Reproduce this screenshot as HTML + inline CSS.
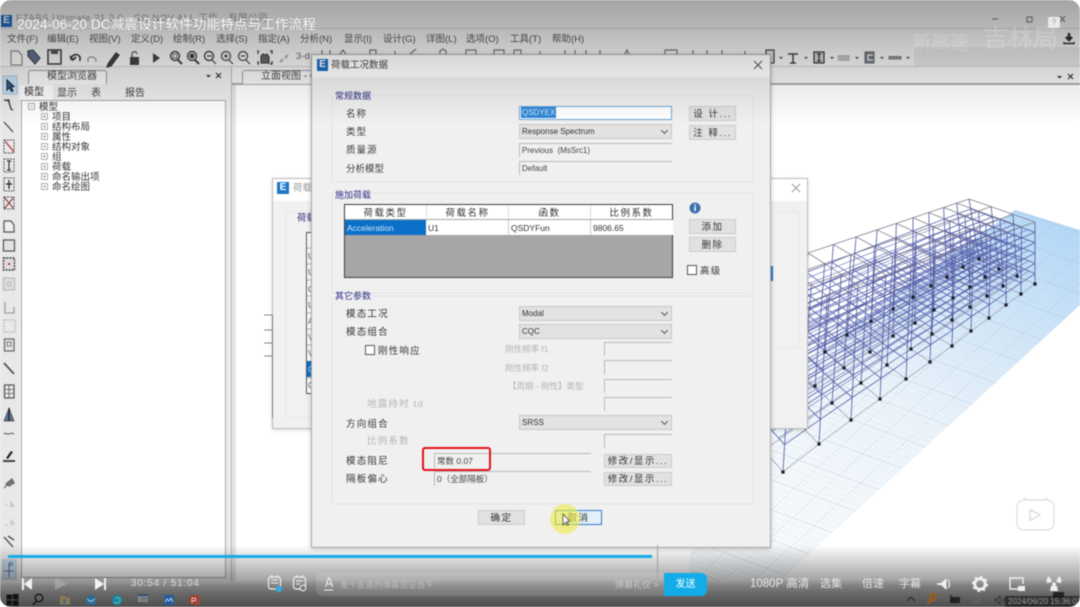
<!DOCTYPE html>
<html lang="zh"><head><meta charset="utf-8"><title>DC减震设计软件</title>
<style>
html,body{margin:0;padding:0;width:1080px;height:607px;overflow:hidden;background:#fff}
#p{position:absolute;left:0;top:0;width:1080px;height:607px;overflow:hidden;background:#fff;border-radius:11px;font-family:"Liberation Sans","Noto Sans CJK SC",sans-serif;font-size:9px;color:#333;filter:blur(.5px)}
.b{position:absolute}
.t{position:absolute;white-space:nowrap;line-height:14px;height:14px}
.m{font-size:9.5px;color:#555;margin-top:1.5px}
.n{font-size:9.5px;color:#3c3c3c;margin-top:1.5px}
.l{letter-spacing:1.2px;font-size:9.5px;color:#333;margin-top:1.5px}
.tr{font-size:9.5px;margin-top:1.5px}
.h{color:#2d2d86;font-size:9px}
.g{color:#b5b5b5;font-size:8.5px}
.gl{color:#b5b5b5;font-size:9.5px;letter-spacing:1.2px;margin-top:1px}
.btn{position:absolute;background:#e1e1e1;border:1px solid #cdcdcd;box-sizing:border-box;text-align:center;font-size:9.5px;letter-spacing:1.5px;color:#333;line-height:15px;white-space:nowrap}
.sel{position:absolute;left:519px;width:153px;height:15px;background:#e2e2e2;border:1px solid #c8c8c8;box-sizing:border-box;font-size:8px;line-height:13px;padding-left:2px;color:#333}
.sel:after{content:"";position:absolute;right:4px;top:3px;width:4px;height:4px;border-right:1px solid #555;border-bottom:1px solid #555;transform:rotate(45deg)}
.f{position:absolute;background:#f0f0f0;border-top:1px solid #b9b9b9;border-left:1px solid #b9b9b9;box-sizing:border-box;font-size:8px;line-height:14px;padding-left:2px;color:#444;white-space:nowrap}
.c{position:absolute;font-size:8.5px;line-height:16px;top:220px;height:15px;color:#333;padding-left:2px;white-space:nowrap}
.th{position:absolute;top:205px;height:14px;line-height:17px;text-align:center;font-size:9.5px;letter-spacing:1.5px;color:#333;background:#fff;border-right:1px solid #ddd;box-sizing:border-box;white-space:nowrap;overflow:hidden}
.w{color:#e6e6e6}
.q{position:absolute;left:308px;font-size:8.5px;line-height:12px;color:#555}
svg{position:absolute;left:0;top:0}
</style></head><body>
<div id="p">

<!-- application chrome -->
<div class="b" style="left:0;top:0;width:1080px;height:84px;background:#f2f2f2"></div>
<div class="b" style="left:0;top:28px;width:1080px;height:1px;background:#d6d6d6"></div>
<div class="b" style="left:914px;top:47px;width:166px;height:19px;background:#e2e2e2"></div>
<div class="b" style="left:0;top:66px;width:1080px;height:1px;background:#d0d0d0"></div>
<div class="b" style="left:232px;top:83px;width:848px;height:2px;background:#a9a9a9"></div>
<div class="b" style="left:0;top:67px;width:18px;height:515px;background:#e8e8e8"></div>
<div class="b" style="left:18px;top:67px;width:214px;height:515px;background:#ececec;border-right:1px solid #b5b5b5;box-sizing:border-box"></div>
<div class="b" style="left:21px;top:100px;width:205px;height:478px;background:#fff;border:1px solid #a8a8a8;box-sizing:border-box"></div>
<div class="b" style="left:28px;top:70px;width:79px;height:14px;background:#f4f4f4;border:1px solid #999;border-bottom:0;border-radius:3px 3px 0 0;box-sizing:border-box"></div>
<div class="b" style="left:20px;top:85px;width:33px;height:15px;background:#fafafa"></div>
<div class="b" style="left:242px;top:70px;width:80px;height:14px;background:#f4f4f4;border:1px solid #999;border-bottom:0;border-radius:3px 3px 0 0;box-sizing:border-box"></div>
<div class="b" style="left:232px;top:85px;width:4px;height:497px;background:#e6e6e6"></div>

<!-- 3D view -->
<svg id="v" width="1080" height="607" viewBox="0 0 1080 607">
<defs><linearGradient id="pl" x1="1040" y1="215" x2="820" y2="540" gradientUnits="userSpaceOnUse"><stop offset="0" stop-color="#b4d8f8"/><stop offset=".3" stop-color="#d3e7f8"/><stop offset=".6" stop-color="#ecf4fb"/><stop offset="1" stop-color="#f7fafc"/></linearGradient>
<clipPath id="cp"><polygon points="1015,210 1080,230 1080,305 770,590 690,590 690,440"/></clipPath></defs>
<polygon points="1015,210 1080,230 1080,305 770,590 690,590 690,440" fill="url(#pl)"/>
<g id="gr" clip-path="url(#cp)"></g>
<g id="st"></g>
</svg>

<!-- title bar + menu -->
<div class="b" style="left:1px;top:15px;width:11px;height:12px;background:#1d6fc0;color:#fff;font:bold 10px/12px 'Liberation Sans',sans-serif;text-align:center">E</div>
<div class="t" style="left:16px;top:12px;font-size:9.5px;color:#9a9a9a;letter-spacing:.5px">ETABS Ultimate 21.3.0 - GQ NOV ALL 工作 - 有限公司</div>
<div class="t m" style="left:7px;top:31px">文件(F)</div>
<div class="t m" style="left:47px;top:31px">编辑(E)</div>
<div class="t m" style="left:89px;top:31px">视图(V)</div>
<div class="t m" style="left:131px;top:31px">定义(D)</div>
<div class="t m" style="left:173px;top:31px">绘制(R)</div>
<div class="t m" style="left:216px;top:31px">选择(S)</div>
<div class="t m" style="left:258px;top:31px">指定(A)</div>
<div class="t m" style="left:300px;top:31px">分析(N)</div>
<div class="t m" style="left:344px;top:31px">显示(I)</div>
<div class="t m" style="left:383px;top:31px">设计(G)</div>
<div class="t m" style="left:426px;top:31px">详图(L)</div>
<div class="t m" style="left:466px;top:31px">选项(O)</div>
<div class="t m" style="left:510px;top:31px">工具(T)</div>
<div class="t m" style="left:552px;top:31px">帮助(H)</div>
<div class="t" style="left:296px;top:50px;font-size:9.5px;color:#666">3-d</div>

<!-- toolbar icons -->
<svg width="1080" height="607" viewBox="0 0 1080 607" fill="none" stroke="#555" stroke-width="1.2">
<path d="M11 51h7l4 4v10H11z" fill="#f4f4f4" stroke="#888"/>
<path d="M28 51l5-1 7 8-5 6-7-8z" fill="#5d6f88" stroke="#445"/>
<rect x="48" y="50" width="13" height="14" fill="#eee" stroke="#444" stroke-width="1.6"/><rect x="51" y="50" width="7" height="4" fill="#555" stroke="none"/>
<path d="M71 60c0-6 7-7 9-3l0 4M70 56l3 4 3-3" stroke="#333" stroke-width="1.6"/>
<path d="M96 62c1-5-6-7-8-3l0 3" stroke="#999" stroke-width="1.4"/>
<path d="M108 64l8-11 3 2-8 11-4 1z" fill="#444" stroke="#333"/>
<rect x="130" y="57" width="9" height="8" fill="#444" stroke="none"/><path d="M132 57v-3c0-3 5-3 5 0"/>
<path d="M153 53l7 5-7 5z" fill="#444" stroke="none"/>
<g stroke="#444"><circle cx="175" cy="56" r="4.500" stroke-width="1.4"/><path d="M178 60l4 4" stroke-width="2"/><rect x="173" y="54" width="4" height="4" stroke-width=".8"/>
<circle cx="192" cy="56" r="4.500" stroke-width="1.4"/><circle cx="192" cy="56" r="2" fill="#444"/><path d="M195 60l4 4" stroke-width="2"/>
<circle cx="209" cy="56" r="4.500" stroke-width="1.4"/><path d="M207 56h5M212 60l4 4" /><circle cx="226" cy="56" r="4.500" stroke-width="1.2"/><path d="M224 56h4M226 54v4M229 60l4 4"/>
<circle cx="243" cy="56" r="4.500" stroke-width="1.2"/><path d="M241 56h4M246 60l4 4"/></g>
<path d="M259 51h-1v3M270 51h2v3M259 64h-1v-3M270 64h2v-3" stroke="#333"/><path d="M261 63v-7l2-2 2 1 2-1 2 3v6z" fill="#666" stroke="#444"/>
<path d="M280 62l3-3M285 58l3-3" stroke="#aaa" stroke-width="2"/>
<!-- partly hidden row above dialog -->
<g stroke="#777"><path d="M322 54v-4M330 54v-4M340 54l3-4 3 4M370 54v-4h6v4M395 54v-3M410 54l6-5M440 54v-3l3-2 3 2v3M466 54v-4h10v4M494 54v-4h10v4M514 54v-4h7v4M540 54v-3M565 54v-4M575 54v-4M586 54v-4M600 54v-4M625 54l2-4 2 4M665 54v-4h12v4M693 54v-4M707 54v-4M722 54v-4M745 54v-3"/></g>
<rect x="766" y="50" width="8" height="13" fill="#ddd" stroke="#444"/>
<g fill="#444" stroke="none"><path d="M779 57h4l-2 2zM804 57h4l-2 2zM830 57h4l-2 2zM855 57h4l-2 2zM880 57h4l-2 2zM906 57h4l-2 2z"/></g>
<path d="M788 54h10M793 54v9M790 63h6" stroke="#444" stroke-width="1.5"/>
<rect x="814" y="52" width="10" height="11" fill="#ccc" stroke="#333"/><path d="M817 54h4M819 54v7M817 61h4" stroke="#333"/>
<path d="M838 56h12M838 58h12M838 60h12" stroke="#777" stroke-dasharray="1 .5"/>
<rect x="865" y="52" width="9" height="11" fill="#6b7382" stroke="#777"/><path d="M873 55h-5v5h5" stroke="#ddd" stroke-width="1.5"/>
<rect x="889" y="56.500" width="12" height="2.500" fill="#999" stroke="#666" stroke-width=".8"/>
<path d="M1069 33v6m-3-2 3 3 3-3" stroke="#333" stroke-width="2.500"/><path d="M1064 42v1.500h10V42" stroke="#333" stroke-width="1.5"/>
<path d="M992 19h6" stroke="#888"/><rect x="1027" y="17" width="5" height="5" stroke="#888"/><path d="M1060 16l5 6m0-6l-5 6" stroke="#888"/>
<path d="M206 75h5l-2.500 2.500z" fill="#333" stroke="none"/><path d="M216 73l5 5m0-5l-5 5" stroke="#333"/>
<path d="M1057 76h5l-2.500 2.500z" fill="#333" stroke="none"/><path d="M1068 74l5 5m0-5l-5 5" stroke="#333"/>

<!-- left vertical toolbar -->
<rect x="3" y="76" width="14" height="18" fill="#c6dcf0" stroke="#8fb0d0" stroke-width=".7"/>
<path d="M7 80l0 10 2.500-2.500 2 4 1.500-.8-2-3.700 3-.5z" fill="#2f5f95" stroke="#234"/>
<path d="M4 100l6 1M8 99l3 10 2 1" stroke="#444" stroke-width="1.4"/>
<path d="M4 122l9 10" stroke="#444" stroke-width="1.2"/>
<g stroke="#555" stroke-dasharray="2 1" stroke-width="1"><rect x="4" y="140" width="10" height="13"/><rect x="4" y="159" width="10" height="13"/><rect x="4" y="178" width="10" height="13"/><rect x="4" y="197" width="10" height="12"/></g>
<path d="M5 141l9 11" stroke="#a33"/><path d="M9 161v9M7 161h4M7 170h4" stroke="#333"/><path d="M9 180v9M6 184h6" stroke="#333" stroke-width="1.4"/><path d="M4 197l10 12M14 197l-10 12" stroke="#844"/>
<path d="M4 221h7l3 4v7H4z" fill="#f0f0f0" stroke="#555"/>
<rect x="3.500" y="240" width="11" height="11" fill="#e2e2e2" stroke="#555"/>
<rect x="3.500" y="258" width="11" height="12" fill="#ddd" stroke="#444" stroke-dasharray="2 1" stroke-width="1.4"/><rect x="8" y="263" width="2" height="2" fill="#b33" stroke="none"/>
<rect x="3.500" y="278" width="11" height="12" fill="#ddd" stroke="#bbb"/><circle cx="9" cy="284" r="2" stroke="#bbb"/>
<path d="M5 302v11h9v-6" stroke="#aaa" stroke-width="1.6"/>
<rect x="4" y="320" width="11" height="12" stroke="#bbb" stroke-dasharray="2 1"/>
<rect x="4.500" y="339" width="9.500" height="12" fill="#e2e2e2" stroke="#666"/><rect x="7" y="342" width="4" height="4" stroke="#666" stroke-width=".8"/>
<path d="M4 363l10 11" stroke="#555" stroke-width="1.8"/>
<rect x="4.500" y="385" width="9.500" height="13" stroke="#555"/><path d="M4.500 389.500h9.500M4.500 393.500h9.500M9 385v13" stroke="#555" stroke-width=".8"/>
<path d="M9 408l-5 13h10z" fill="#5d7390" stroke="#444" stroke-width=".7"/><path d="M9 408v13" stroke="#222"/>
<path d="M4 434c2-2 3 1 5 0s3-1 5 0" stroke="#666"/>
<path d="M6 458l5-7 2 1-5 7z" fill="#222" stroke="none"/><path d="M3 461h12" stroke="#444" stroke-width="2"/>
<path d="M4 488l3-3M6 484l6-5 2 4-5 3z" fill="#777" stroke="#666"/>
<path d="M5 505h3M11 502l3 4-3 1z" fill="#bbb" stroke="#ccc"/>
<path d="M5 525h3M11 520l3 4-3 1z" fill="#bbb" stroke="#ccc"/>
<path d="M4 537l9 10M8 536l6 4" stroke="#555" stroke-width="1.4"/>
<rect x="3" y="560" width="13" height="19" fill="#c2d8ea" stroke="#9db7cc" stroke-width=".7"/>
<path d="M9 563v14M4 571h10" stroke="#557" stroke-width=".8"/><circle cx="11" cy="564" r="1.500" stroke="#557" stroke-width=".7"/>
<!-- tree -->
<g stroke="#9a9a9a" stroke-width=".8">
<rect x="28.500" y="103.500" width="6" height="6" fill="#fff"/><path d="M30 106.500h3"/>
<g fill="#fff"><rect x="41.500" y="113.500" width="6" height="6"/><rect x="41.500" y="123.500" width="6" height="6"/><rect x="41.500" y="133.500" width="6" height="6"/><rect x="41.500" y="143.500" width="6" height="6"/><rect x="41.500" y="153.500" width="6" height="6"/><rect x="41.500" y="163.500" width="6" height="6"/><rect x="41.500" y="173.500" width="6" height="6"/><rect x="41.500" y="183.500" width="6" height="6"/></g>
<path d="M43 116.500h3M44.500 115v3M43 126.500h3M44.500 125v3M43 136.500h3M44.500 135v3M43 146.500h3M44.500 145v3M43 156.500h3M44.500 155v3M43 166.500h3M44.500 165v3M43 176.500h3M44.500 175v3M43 186.500h3M44.500 185v3"/>
</g>
<!-- lines left of back dialog -->
<path d="M264 315h8M264 330h8M264 343h8M264 356h8" stroke="#888" stroke-width="1"/>
</svg>

<div class="t" style="left:47px;top:70px;font-size:10px;color:#444">模型浏览器</div>
<div class="t" style="left:261px;top:70px;font-size:10px;color:#444">立面视图 - G</div>
<div class="t" style="left:24px;top:86px;font-size:10px;color:#333">模型</div>
<div class="t" style="left:57px;top:87px;font-size:10px;color:#444">显示</div>
<div class="t" style="left:91px;top:87px;font-size:10px;color:#444">表</div>
<div class="t" style="left:125px;top:87px;font-size:10px;color:#444">报告</div>
<div class="t tr" style="left:39px;top:99px">模型</div>
<div class="t tr" style="left:52px;top:109px">项目</div>
<div class="t tr" style="left:52px;top:119px">结构布局</div>
<div class="t tr" style="left:52px;top:129px">属性</div>
<div class="t tr" style="left:52px;top:139px">结构对象</div>
<div class="t tr" style="left:52px;top:149px">组</div>
<div class="t tr" style="left:52px;top:159px">荷载</div>
<div class="t tr" style="left:52px;top:169px">命名输出项</div>
<div class="t tr" style="left:52px;top:179px">命名绘图</div>

<!-- back dialog -->
<div class="b" style="left:272px;top:178px;width:536px;height:251px;background:#f1f1f1;border:1px solid #bdbdbd;box-sizing:border-box;box-shadow:0 1px 4px rgba(0,0,0,.15)">
 <div class="b" style="left:0;top:0;width:534px;height:22px;background:#fff"></div>
 <div class="b" style="left:505px;top:32px;width:20px;height:135px;border:1px solid #e6e6e6;border-left:0"></div>
 <div class="b" style="left:12px;top:32px;width:28px;height:205px;border:1px solid #e8e8e8;border-right:0"></div>
</div>
<div class="b" style="left:272px;top:315px;width:1px;height:103px;background:#777"></div>
<div class="b" style="left:277px;top:182px;width:12px;height:12px;background:#1d78c8;color:#fff;font:bold 10px/12px 'Liberation Sans',sans-serif;text-align:center">E</div>
<div class="t" style="left:293px;top:182px;font-size:9.5px;color:#999">荷载</div>
<div class="t" style="left:297px;top:212px;font-size:9.5px;color:#2d2d86">荷载</div>
<div class="b" style="left:306px;top:232px;width:6px;height:162px;background:#fff;border:1px solid #555;box-sizing:border-box"></div>
<div class="b" style="left:307px;top:361px;width:5px;height:16px;background:#0a70c8"></div>
<div class="q" style="top:250px">U</div><div class="q" style="top:266px">U</div><div class="q" style="top:283px">C</div><div class="q" style="top:299px">U</div><div class="q" style="top:315px">A</div><div class="q" style="top:331px">V</div><div class="q" style="top:347px">V</div><div class="q" style="top:363px;color:#cfe4f7">Q</div><div class="q" style="top:379px">Q</div>
<svg width="1080" height="607" viewBox="0 0 1080 607" fill="none" stroke="#bbb"><path d="M307 248h5M307 264h5M307 280h5M307 296h5M307 313h5M307 329h5M307 345h5M307 378h5"/><path d="M792 184l8 8m0-8l-8 8" stroke="#999"/></svg>
<div class="b" style="left:771px;top:266px;width:2px;height:15px;background:#2a78c0"></div>

<!-- main dialog -->
<div class="b" style="left:311px;top:54px;width:460px;height:494px;background:#f0f0f0;border:1px solid #a9a9a9;box-sizing:border-box;box-shadow:0 1px 5px rgba(0,0,0,.2)"></div>
<div class="b" style="left:312px;top:55px;width:458px;height:22px;background:#fff"></div>
<div class="b" style="left:317px;top:59px;width:11px;height:12px;background:#1d6fc0;color:#fff;font:bold 10px/12px 'Liberation Sans',sans-serif;text-align:center">E</div>
<div class="t" style="left:331px;top:59px;font-size:9.5px;color:#444">荷载工况数据</div>

<svg width="1080" height="607" viewBox="0 0 1080 607" fill="none">
<path d="M754 61l8 8m0-8l-8 8" stroke="#555"/>
<path d="M332 96v86h421V96h-383M332 193v100h421V193H370M332 296v208h421V296H370" stroke="#e4e4e4"/>
<circle cx="695" cy="208" r="5.500" fill="#3f6fae"/><rect x="694.300" y="206.500" width="1.500" height="4.500" fill="#fff"/><rect x="694.300" y="204.200" width="1.500" height="1.400" fill="#fff"/>
<rect x="687.500" y="265.500" width="9" height="9" fill="#fff" stroke="#555"/>
<rect x="365.500" y="345.500" width="9" height="9" fill="#fff" stroke="#555"/>
</svg>

<div class="t h" style="left:335px;top:89px">常规数据</div>
<div class="t n" style="left:346px;top:106px;letter-spacing:1px">名称</div>
<div class="t n" style="left:346px;top:124px;letter-spacing:1px">类型</div>
<div class="t n" style="left:346px;top:142px;letter-spacing:1px">质量源</div>
<div class="t n" style="left:346px;top:161px">分析模型</div>
<div class="f" style="left:519px;top:106px;width:153px;height:14px;background:#fff;border:1px solid #6aa6d6;line-height:12px;padding-left:1px"><span style="background:#2f86d6;color:#cfe6fa;padding:0 1px;display:inline-block;line-height:11px">QSDYEX</span></div>
<div class="sel" style="top:124px">Response Spectrum</div>
<div class="f" style="left:519px;top:143px;width:153px;height:14px">Previous&nbsp; (MsSrc1)</div>
<div class="f" style="left:519px;top:161px;width:153px;height:14px">Default</div>
<div class="btn" style="left:689px;top:106px;width:47px;height:15px">设 计...</div>
<div class="btn" style="left:689px;top:125px;width:47px;height:15px">注 释...</div>

<div class="t h" style="left:335px;top:188px">施加荷载</div>
<div class="b" style="left:344px;top:204px;width:329px;height:74px;background:#a6a6a6;border:1.500px solid #3e3e3e;box-sizing:border-box"></div>
<div class="th" style="left:345px;width:82px">荷载类型</div>
<div class="th" style="left:427px;width:82px">荷载名称</div>
<div class="th" style="left:509px;width:82px">函数</div>
<div class="th" style="left:591px;width:81px;border-right:0">比例系数</div>
<div class="c" style="left:345px;width:80px;background:#0a70c8;color:#cfe4f7">Acceleration</div>
<div class="c" style="left:426px;width:80px;background:#fff">U1</div>
<div class="c" style="left:508px;width:80px;background:#fff;border-left:1px solid #ccc">QSDYFun</div>
<div class="c" style="left:590px;width:80px;background:#fff;border-left:1px solid #ccc">9806.65</div>
<div class="btn" style="left:689px;top:219px;width:47px;height:15px">添加</div>
<div class="btn" style="left:689px;top:237px;width:47px;height:15px">删除</div>
<div class="t l" style="left:700px;top:263px">高级</div>

<div class="t h" style="left:335px;top:289px">其它参数</div>
<div class="t l" style="left:346px;top:306px">模态工况</div>
<div class="t l" style="left:346px;top:324px">模态组合</div>
<div class="t l" style="left:378px;top:343px">刚性响应</div>
<div class="t gl" style="left:367px;top:397px">地震持时 td</div>
<div class="t l" style="left:346px;top:416px">方向组合</div>
<div class="t gl" style="left:367px;top:434px">比例系数</div>
<div class="t l" style="left:346px;top:453px">模态阻尼</div>
<div class="t l" style="left:346px;top:471px">隔板偏心</div>
<div class="t g" style="left:505px;top:342px">刚性频率 f1</div>
<div class="t g" style="left:505px;top:361px">刚性频率 f2</div>
<div class="t g" style="left:508px;top:379px">【周期 - 刚性】类型</div>
<div class="sel" style="top:306px">Modal</div>
<div class="sel" style="top:324px">CQC</div>
<div class="sel" style="top:415px">SRSS</div>
<div class="f" style="left:604px;top:342px;width:68px;height:14px"></div>
<div class="f" style="left:604px;top:360px;width:68px;height:14px"></div>
<div class="f" style="left:604px;top:379px;width:68px;height:14px"></div>
<div class="f" style="left:604px;top:397px;width:68px;height:14px"></div>
<div class="f" style="left:604px;top:434px;width:68px;height:14px"></div>
<div class="f" style="left:434px;top:453px;width:157px;height:15px;font-size:8.5px">常数 0.07</div>
<div class="f" style="left:434px;top:471px;width:157px;height:15px;font-size:8.5px">0（全部隔板）</div>
<div class="btn" style="left:604px;top:454px;width:68px;height:14px;line-height:13px">修改/显示...</div>
<div class="btn" style="left:604px;top:472px;width:68px;height:14px;line-height:13px">修改/显示...</div>
<div class="b" style="left:422px;top:447px;width:69px;height:24px;border:2px solid #e2141a;border-radius:3px;box-sizing:border-box"></div>

<div class="btn" style="left:478px;top:510px;width:47px;height:15px">确定</div>
<div class="btn" style="left:555px;top:510px;width:47px;height:15px;background:#e3f0fa;border-color:#2c7fc8">取消</div>
<div class="b" style="left:550px;top:504px;width:30px;height:30px;border-radius:50%;background:radial-gradient(circle,rgba(238,235,70,.7) 0,rgba(238,235,70,.6) 65%,rgba(238,235,70,0) 100%)"></div>
<svg width="1080" height="607" viewBox="0 0 1080 607"><path d="M563 514v11l2.500-2.500 2 3 1.200-.8-2-3 3-.3z" fill="#fff" stroke="#444" stroke-width=".8"/></svg>

<!-- logo bottom right -->
<svg width="1080" height="607" viewBox="0 0 1080 607" fill="none">
<path d="M1024 498l3 3M1047 498l-3 3" stroke="#e0e0e0" stroke-width="1.5"/>
<rect x="1017" y="500" width="37" height="30" rx="7" fill="#fff" stroke="#e2e2e2" stroke-width="1.4"/>
<path d="M1030 509.500l10 5.500-10 5.500z" fill="#fff" stroke="#dcdcdc" stroke-width="1.5" stroke-linejoin="round"/>
</svg>

<!-- dim overlays -->
<div class="b" style="left:0;top:0;width:1080px;height:125px;background:linear-gradient(rgba(0,0,0,.32) 0,rgba(0,0,0,.25) 25px,rgba(0,0,0,.17) 50px,rgba(0,0,0,.09) 80px,rgba(0,0,0,0) 125px)"></div>
<div class="b" style="left:0;top:545px;width:1080px;height:37px;background:linear-gradient(rgba(0,0,0,0),rgba(0,0,0,.38))"></div>
<div class="b" style="left:0;top:581px;width:1080px;height:26px;background:linear-gradient(#999 0,#7c7c7c 6px,#6a6a6a 12px,#4e4e4e 26px)"></div>

<!-- watermark -->
<div class="t" style="left:912px;top:34px;font-size:19px;color:rgba(255,255,255,.2);height:20px;line-height:20px">新高速</div>
<div class="t" style="left:983px;top:24px;font-size:25px;color:rgba(255,255,255,.2);height:30px;line-height:30px">吉林局</div>
<div class="b" style="left:1048px;top:17px;width:12px;height:11px;background:#e9e9e9;border-radius:2px;color:#999;font-size:8px;line-height:11px;text-align:center">?</div>

<!-- video title -->
<div class="t" style="left:17px;top:15px;height:20px;line-height:20px;font-size:13.7px;color:#fff;text-shadow:0 0 1px rgba(0,0,0,.3)">2024-06-20 DC减震设计软件功能特点与工作流程</div>

<!-- player -->
<div class="b" style="left:8px;top:555px;width:644px;height:3px;background:#12ace8"></div>
<div class="b" style="left:657px;top:545px;width:1px;height:36px;background:#a0a0a0"></div>
<div class="b" style="left:316px;top:573px;width:348px;height:23px;background:rgba(255,255,255,.13);border-radius:6px 0 0 6px"></div>
<div class="b" style="left:664px;top:573px;width:43px;height:23px;background:#12ace8;border-radius:0 6px 6px 0;color:#fff;font-size:10px;line-height:23px;text-align:center">发送</div>
<div class="t" style="left:131px;top:577px;font-size:10px;color:#dcdcdc;letter-spacing:.8px">30:54 / 51:04</div>
<div class="t" style="left:340px;top:578px;font-size:8.5px;color:rgba(255,255,255,.35)">发个友善的弹幕见证当下</div>
<div class="t" style="left:615px;top:578px;font-size:9px;color:rgba(255,255,255,.45)">弹幕礼仪 &gt;</div>
<div class="t w" style="left:750px;top:576px;font-size:11.5px;height:16px;line-height:16px">1080P 高清</div>
<div class="t w" style="left:820px;top:576px;font-size:11px;height:16px;line-height:16px">选集</div>
<div class="t w" style="left:862px;top:576px;font-size:11px;height:16px;line-height:16px">倍速</div>
<div class="t w" style="left:899px;top:576px;font-size:11px;height:16px;line-height:16px">字幕</div>
<svg width="1080" height="607" viewBox="0 0 1080 607" fill="none">
<path d="M22 578h2v12h-2zM32 578v12l-8-6z" fill="#f2f2f2"/>
<path d="M55 578l12 6-12 6z" fill="#b5b5b5" opacity=".55"/>
<path d="M95 578l9 6-9 6zM104 578h2v12h-2z" fill="#f2f2f2"/>
<rect x="268.500" y="577" width="12" height="12" rx="2.500" stroke="#eee" stroke-width="1.2"/><path d="M271 575l1 2M278 575l-1 2" stroke="#eee"/><path d="M271 583h7M271 580h7" stroke="#eee" stroke-width="1"/><circle cx="279" cy="589" r="3.200" fill="#32a8e0"/>
<rect x="293.500" y="577" width="12" height="12" rx="2.500" stroke="#eee" stroke-width="1.2"/><path d="M296 575l1 2M303 575l-1 2" stroke="#eee"/><path d="M296 581h7M296 584h4" stroke="#eee"/><circle cx="303" cy="588" r="2.800" stroke="#eee" fill="#777"/>
<path d="M325.500 587l3-9h1l3 9M327 584h4.500" stroke="#f0f0f0" stroke-width="1.1"/><path d="M324 590h9" stroke="#f0f0f0" stroke-width="1"/>
<path d="M937 584l5-1 4-4v10l-4-4z" fill="#eee" stroke="#eee" stroke-linejoin="round"/><path d="M948 580c2 2 2 6 0 8" stroke="#eee" stroke-width="1.2"/>
<circle cx="980" cy="584" r="5.300" stroke="#eee" stroke-width="3"/><circle cx="980" cy="584" r="7.300" stroke="#eee" stroke-width="1.6" stroke-dasharray="2.500 3.200"/>
<path d="M1018 589h-8v-11h13v6" stroke="#eee" stroke-width="1.4"/><rect x="1018" y="586" width="7" height="5" fill="#eee"/>
<circle cx="1054" cy="584" r="1.800" fill="#eee"/><path d="M1049 576l3 6-5 1c-1-3 0-5 2-7zM1059 576l-3 6 5 1c1-3 0-5-2-7zM1051 586l3-1 3 1 1 5h-8z" fill="#eee"/>
<!-- taskbar -->
<g fill="#111"><rect x="6.500" y="594.500" width="5.500" height="5"/><rect x="12.800" y="594" width="5.800" height="5.500"/><rect x="6.500" y="600.300" width="5.500" height="5"/><rect x="12.800" y="600.300" width="5.800" height="5.500"/></g>
<circle cx="39" cy="598" r="3.800" stroke="#111" stroke-width="1.3"/><path d="M36 601.500l-3 3.500" stroke="#111" stroke-width="1.5"/>
<path d="M60 596h5l1 1.500h4v7h-10z" fill="#8d7a4e"/><rect x="63" y="599" width="3" height="5" fill="#4b6a86"/>
<path d="M86 598l5-3.500 5 3.500v6.500H86z" fill="#2c6c96"/><path d="M87 599l4 2.500 4-2.500" stroke="#b8cdda"/>
<circle cx="117" cy="600" r="5.300" fill="#1d7fa2"/><path d="M114 602c2 2 6 1 6-2s-4-3-5-1" stroke="#46bca0" stroke-width="1.3"/>
<rect x="138" y="594" width="10" height="2" fill="#2e4e74"/><rect x="138" y="596" width="10" height="6" fill="#7f8a8e"/><path d="M141 598h7M141 600h5" stroke="#555" stroke-width=".7"/>
<rect x="164" y="595" width="10" height="10" fill="#245c9a"/><path d="M165 602l2-3 2 2 2-3 2 4" stroke="#b5d0ea"/>
<circle cx="194" cy="600" r="5" fill="#a13a2a"/><rect x="195" y="595" width="5" height="10" fill="#a1463a"/><path d="M192 603v-5h2a1.300 1.300 0 0 1 0 3h-2" stroke="#eee" stroke-width=".8"/>
<path d="M907 601l4-4 4 4" stroke="#222"/>
<circle cx="933" cy="597" r="3" stroke="#a25c10" stroke-width="2"/><path d="M931 600l-3.500 4" stroke="#a25c10" stroke-width="2"/>
<rect x="950" y="597" width="10" height="6" fill="#222"/><path d="M950 595l2 2" stroke="#222"/>
<path d="M973 604c0-5 3-8 8-8M976 604c0-3 2-5 5-5M979 604c0-1 1-2 2-2" stroke="#666" stroke-width=".9"/>
<path d="M995 599h2l3-3v8l-3-3h-2z" stroke="#2a2a2a" stroke-width=".8"/><path d="M1002 598l3 4m0-4l-3 4" stroke="#333" stroke-width=".8"/>
<rect x="1053" y="592" width="11" height="6" fill="#222"/>
</svg>
<div class="b" style="left:1005px;top:596px;width:75px;height:11px;background:rgba(20,20,20,.62)"></div>
<div class="b" style="left:1008px;top:596px;height:11px;line-height:11px;white-space:nowrap;font-size:8px;color:#9f9f9f">2024/06/20 15:36:03</div>
</div>

<script>
(function(){
var NS="http://www.w3.org/2000/svg";
function ln(g,a,b,c,w,o){var e=document.createElementNS(NS,"line");e.setAttribute("x1",a[0]);e.setAttribute("y1",a[1]);e.setAttribute("x2",b[0]);e.setAttribute("y2",b[1]);e.setAttribute("stroke",c);e.setAttribute("stroke-width",w);if(o)e.setAttribute("opacity",o);g.appendChild(e);}
function clip(a,b){var t0=0,t1=1,dx=b[0]-a[0],dy=b[1]-a[1],p=[-dx,dx,-dy,dy],q=[a[0]-690,1080-a[0],a[1]-205,590-a[1]];
 for(var n=0;n<4;n++){if(p[n]==0){if(q[n]<0)return null;}else{var r=q[n]/p[n];if(p[n]<0){if(r>t1)return null;if(r>t0)t0=r;}else{if(r<t0)return null;if(r<t1)t1=r;}}}
 return [[a[0]+t0*dx,a[1]+t0*dy],[a[0]+t1*dx,a[1]+t1*dy]];}
function cl(g,a,b,c,w,o){var s=clip(a,b);if(s)ln(g,s[0],s[1],c,w,o);}
var gr=document.getElementById("gr"),st=document.getElementById("st");
var dx=-0.738,dy=0.675,i,j,k;
for(i=-60;i<150;i++){var ox=1080+i*6,oy=200;cl(gr,[ox+200*(-dx),oy+200*(-dy)],[ox+600*dx,oy+600*dy],i%5==0?"#aab8c4":"#cfdae2",i%5==0?.5:.3,.6);}
for(i=-40;i<130;i++){var sx=690,sy=240+i*6;cl(gr,[sx,sy],[sx+420,sy+155],i%5==0?"#aab8c4":"#cfdae2",i%5==0?.5:.3,.6);}
var R=[[783,472,819,444,851,420,880,399,906,379,930,362,952,346,971,331,989,318,1006,305,1021,294,1035,284],
[764,450,800,425,832,403,861,383,887,365,911,349,932,334,952,320,970,307,987,296,1003,286,1017,276],
[747,428,783,405,815,386,844,368,870,352,893,336,915,323,934,310,953,298,970,287,985,277,999,269],
[725,410,764,390,798,369,825,352,847,335,871,321,893,309,913,297,931,286,947,277,963,267,979,259]];
var T=[[858,285],[1035,222],[808,253],[969,199]];
var N=11;
function foot(a,b){return [R[b][a*2],R[b][a*2+1]];}
function top(a,b){var s=(R[0][a*2]-851)/(1035-851),t=b/3;
var x0=T[0][0]+(T[1][0]-T[0][0])*s,y0=T[0][1]+(T[1][1]-T[0][1])*s,x1=T[2][0]+(T[3][0]-T[2][0])*s,y1=T[2][1]+(T[3][1]-T[2][1])*s;
return [x0+(x1-x0)*t,y0+(y1-y0)*t];}
function P(a,b,l){var f=foot(a,b),u=top(a,b),q=l/6;return [f[0]+(u[0]-f[0])*q,f[1]+(u[1]-f[1])*q];}
function lerp(p,q,t){return [p[0]+(q[0]-p[0])*t,p[1]+(q[1]-p[1])*t];}
for(k=0;k<=6;k++){
 var col=k==6?"#80808e":(k==0?"#9096a4":"#5a64ac"),w=k==6?.8:(k==0?.6:.85);
 for(j=0;j<4;j++){for(i=0;i<N;i++)ln(st,P(i,j,k),P(i+1,j,k),col,w);}
 for(i=0;i<=N;i++){for(j=0;j<3;j++)ln(st,P(i,j,k),P(i,j+1,k),col,w);}
 if(k>0&&k<6){for(j=0;j<3;j++){for(i=0;i<N;i++){
   ln(st,lerp(P(i,j,k),P(i,j+1,k),.33),lerp(P(i+1,j,k),P(i+1,j+1,k),.33),"#6570b8",.6);
   ln(st,lerp(P(i,j,k),P(i,j+1,k),.67),lerp(P(i+1,j,k),P(i+1,j+1,k),.67),"#6570b8",.6);
 }}}
}
for(i=0;i<=N;i++){for(j=0;j<4;j++){ln(st,foot(i,j),top(i,j),"#5560a5",.85);
 var f=foot(i,j),r=document.createElementNS(NS,"rect");r.setAttribute("x",f[0]-1.6);r.setAttribute("y",f[1]-1.6);r.setAttribute("width",3.2);r.setAttribute("height",3.2);r.setAttribute("fill","#1e1e2a");st.appendChild(r);}}
})();
</script>
</body></html>
